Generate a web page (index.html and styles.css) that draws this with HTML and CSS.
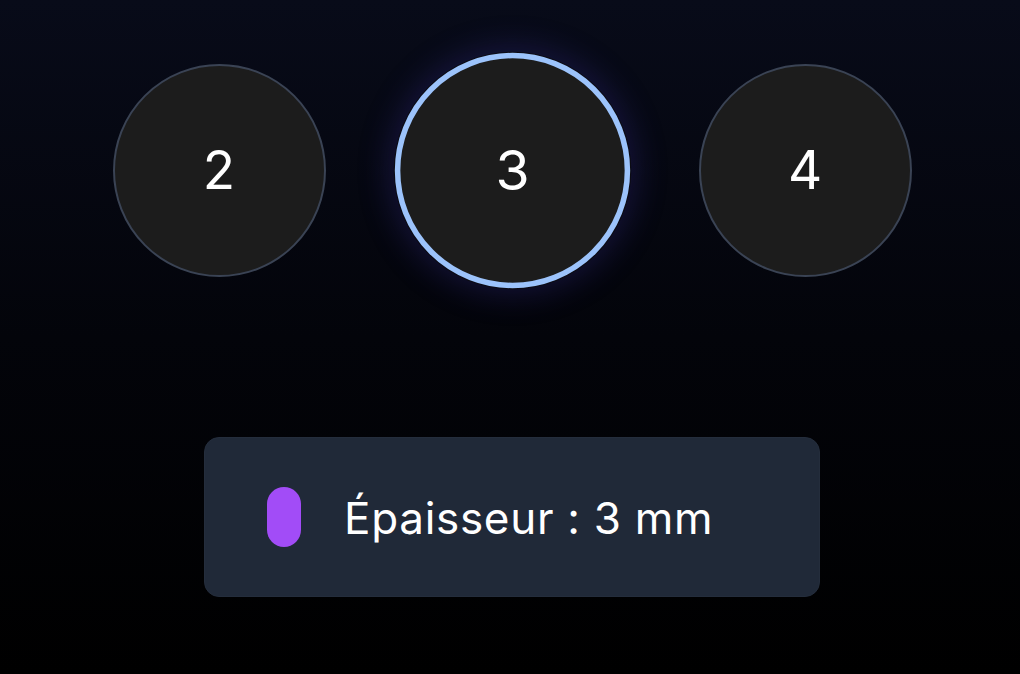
FILE: index.html
```html
<!DOCTYPE html>
<html lang="fr">
<head>
<meta charset="utf-8">
<title>Épaisseur</title>
<link rel="stylesheet" href="styles.css">
</head>
<body>
<main class="stage">
  <div class="options">
    <button class="opt">2</button>
    <button class="opt selected">3</button>
    <button class="opt">4</button>
  </div>
  <div class="card">
    <span class="pill"></span>
    <span class="label">Épaisseur : 3 mm</span>
  </div>
</main>
</body>
</html>
```
FILE: styles.css
```css
html, body {
  margin: 0;
  padding: 0;
  height: 100%;
}
body {
  background: linear-gradient(180deg, #080b19 0%, #03040a 50%, #000000 100%);
  font-family: Inter, "Noto Sans", sans-serif;
  font-feature-settings: "calt" 0;
  color: #ffffff;
  overflow: hidden;
}
.stage {
  display: flex;
  flex-direction: column;
  align-items: center;
  padding: 64px 0 0 4px;
  box-sizing: border-box;
  height: 100%;
}
.options {
  display: flex;
  gap: 80px;
  align-items: center;
}
.opt {
  width: 213px;
  height: 213px;
  border-radius: 50%;
  background: #1c1c1c;
  border: 2.5px solid #3a4354;
  color: #ffffff;
  font-family: Inter, "Noto Sans", sans-serif;
  font-size: 53px;
  font-weight: 400;
  display: flex;
  align-items: center;
  justify-content: center;
  padding: 0 0 2px 0;
  box-sizing: border-box;
}
.opt.selected {
  transform: scale(1.105);
  border: 5px solid #9cc3fb;
  font-size: 50px;
  box-shadow: 0 0 0 1px #0c0c14, 0 0 28px 6px rgba(60, 50, 160, 0.28);
}
.card {
  margin-top: 160px;
  width: 616px;
  height: 160px;
  box-sizing: border-box;
  background: #202938;
  border: 1px solid #242d3c;
  border-radius: 15px;
  display: flex;
  align-items: center;
  padding-left: 62px;
  gap: 43px;
}
.pill {
  width: 34px;
  height: 60px;
  border-radius: 17px;
  background: #a24cf7;
  flex: none;
}
.label {
  font-size: 44px;
  font-weight: 400;
  letter-spacing: 0.7px;
  padding-top: 2px;
  font-feature-settings: "calt" 0;
}
```
